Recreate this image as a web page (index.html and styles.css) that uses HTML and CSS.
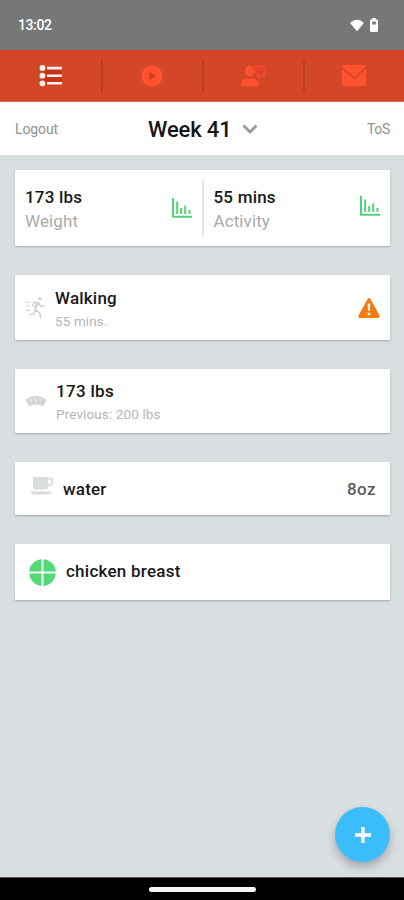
FILE: index.html
```html
<!DOCTYPE html>
<html lang="en">
<head>
<meta charset="utf-8">
<title>Week 41</title>
<link rel="stylesheet" href="styles.css">
</head>
<body>
<div class="app">
  <div class="status">
    <span class="clock">13:02</span>
    <svg class="wifi" viewBox="0 0 16 14"><path d="M0.500 4.200Q8-2.500 15.500 4.200L8 13.300Z"/></svg>
    <svg class="battery" viewBox="0 0 8 14"><path fill-rule="evenodd" d="M2.300 0h3.400v1.400h1.100Q8 1.400 8 2.600v9.900Q8 14 6.600 14H1.400Q0 14 0 12.500V2.600Q0 1.400 1.200 1.400h1.100zM2.200 3.600v3h3.600v-3z"/></svg>
  </div>
  <nav class="tabs">
    <a class="tab active"><svg width="24" height="24" viewBox="0 0 24 24"><g fill="#fff3ee"><path fill="#b52106" d="M3 3h20v18H3z" opacity=".5"/><circle cx="3.500" cy="4" r="2.900"/><circle cx="3.500" cy="11.700" r="2.900"/><circle cx="3.500" cy="19.300" r="2.900"/><path d="M8 2.800h15v2.600H8zM8 10.400h15V13H8zM8 18h15v2.600H8z"/></g></svg></a>
    <a class="tab"><svg width="22" height="22" viewBox="0 0 22 22"><circle cx="11" cy="11" r="10.500"/><path fill="#ce3c22" d="M8.300 6.800v8.400l6.800-4.200z"/></svg></a>
    <a class="tab"><svg width="26" height="22" viewBox="0 0 26 22"><ellipse cx="9.500" cy="6" rx="4.500" ry="5.400"/><path d="M1 21v-1.500Q1.500 14.500 7 13l2.700 1.200L12.500 13Q18 14.500 18.500 19.500V21z"/><path d="M15 7.800V1.700h9.500v8.500h-2.200l-3.300 2.600v-2.600h-3.500" fill="#dd4327" stroke="#f44c2d" stroke-width="1.700" stroke-linejoin="round"/></svg></a>
    <a class="tab"><svg width="24" height="21" viewBox="0 0 24 21"><path d="M1.500 0h21Q24 0 24 1.500L12.500 12 0 1.500Q0 0 1.500 0zM0 4l12.500 10.300L24 4v15q0 2-2 2H2q-2 0-2-2z"/></svg></a>
  </nav>
  <header class="header">
    <a class="logout">Logout</a>
    <h1>Week 41</h1>
    <svg class="chevron" viewBox="0 0 16 10"><path d="M1.500 1.500 8 8l6.500-6.500"/></svg>
    <a class="tos">ToS</a>
  </header>
  <main class="feed">
    <section class="card summary">
      <div class="metric">
        <div><div class="title">173 lbs</div><div class="label">Weight</div></div>
        <svg class="chart low" viewBox="0 0 20 20"><path d="M1 0v18.700h19"/><path d="M5.200 3.500v12.500M9.200 10v6M13.200 7.500v8.500M17.500 12v4"/></svg>
      </div>
      <div class="metric">
        <div><div class="title">55 mins</div><div class="label">Activity</div></div>
        <svg class="chart" viewBox="0 0 20 20"><path d="M1 0v18.700h19"/><path d="M5.200 3.500v12.500M9.200 10v6M13.200 7.500v8.500M17.500 12v4"/></svg>
      </div>
    </section>
    <section class="card entry walking">
      <svg class="runner" viewBox="0 0 20 24"><circle cx="15" cy="2.700" r="1.700" fill="#d0d4d5" stroke="none"/><path d="M0 6h5M1.500 10h3.500M1 14.500h4.500" stroke-width="1.200"/><path d="M7.500 10.500l1.500-4 4.300.2 2 3.300h4M13 7l-2.700 6.500 4.500 3.500 1 5.500M10.500 14l-2 4.500H4.500"/><path d="M12.300 7l-2.300 6" stroke-width="2.400"/></svg>
      <div class="text"><div class="title">Walking</div><div class="small">55 mins.</div></div>
      <svg class="warning" viewBox="0 0 22 20"><path fill="#f27a12" d="M9.600 1Q11-.8 12.400 1l9 16.300Q22 20 20 20H2Q0 20 .6 17.300z"/><path fill="#fff0dc" d="M9.700 5.500h2.600L12 13h-2zM9.700 14.700h2.600v2.500H9.700z"/></svg>
    </section>
    <section class="card entry weight">
      <svg class="scale" viewBox="0 0 22 12"><path fill="#d3d6d7" d="M.4 5Q11-3.500 21.600 5l-3.400 5.700q-1 .6-2-.3-5.200-2-10.400 0-1 .9-2 .3z"/><path d="M5.500 4l1 3M9.500 3l2 4.500M15.500 4l-.5 2" stroke="#f2f3f3" stroke-width="1"/></svg>
      <div class="text"><div class="title">173 lbs</div><div class="small">Previous: 200 lbs</div></div>
    </section>
    <section class="card entry water">
      <svg class="cup" viewBox="0 0 24 18"><path fill="#d9dddd" d="M3 0h15v10q0 2.500-2.500 2.500h-10Q3 12.500 3 10zM0 14.500h22Q21 17.500 19 17.500H3Q1 17.500 0 14.500z"/><path fill="none" stroke="#d9dddd" stroke-width="1.800" d="M17 1.500h2.500q3 0 3 3.200t-3 3.300H17"/></svg>
      <div class="title">water</div><div class="amount">8oz</div>
    </section>
    <section class="card entry food">
      <svg class="plate" viewBox="0 0 27 27"><circle cx="13.500" cy="13.500" r="13.300" fill="#54d977"/><path d="M13.500 0v27M0 13.500h27" stroke="#effff2" stroke-width="2"/></svg>
      <div class="title">chicken breast</div>
    </section>
  </main>
  <footer class="system"><div class="handle"></div></footer>
  <button class="add" aria-label="Add"><svg width="16" height="16" viewBox="0 0 16 16"><path d="M8 0v16M0 8h16" stroke="#fff" stroke-width="3.400"/></svg></button>
</div>
</body>
</html>
```
FILE: styles.css
```css
* { box-sizing: border-box; }
body { margin: 0; font-family: Roboto, "Liberation Sans", sans-serif; }
svg { display: block; flex-shrink: 0; }
.app { position: relative; width: 404px; height: 900px; display: flex; flex-direction: column; overflow: hidden; background: #d9dee0; }
.status { height: 50px; background: #777; color: #fff; display: flex; align-items: center; padding: 0 26px 0 18px; flex-shrink: 0; }
.clock { font-size: 14px; line-height: 16px; font-weight: 500; letter-spacing: -0.4px; flex: 1; }
.wifi { width: 16px; height: 13px; fill: #fff; margin-right: 5px; }
.battery { width: 8px; height: 14px; fill: #fff; }
.tabs { height: 52px; background: #d34727; display: grid; grid-template-columns: repeat(4, 1fr); flex-shrink: 0; border-bottom: 1px solid #e5684f; }
.tab { display: flex; align-items: center; justify-content: center; fill: #ff5231; position: relative; }
.tab + .tab::before { content: ""; position: absolute; left: 0; top: 10px; width: 2px; height: 32px; background: #bd3e23; }
.header { height: 53px; background: #fff; display: flex; align-items: center; padding: 0 14px 0 15px; flex-shrink: 0; color: #8f8f8f; font-size: 14px; }
.logout { width: 133px; letter-spacing: -0.1px; }
h1 { margin: 0; font-size: 22px; line-height: 26px; font-weight: 500; color: #161616; padding-top: 3px; width: 94px; white-space: nowrap; letter-spacing: -0.15px; }
.chevron { width: 16px; height: 10px; fill: none; stroke: #999; stroke-width: 2.800; }
.tos { margin-left: auto; letter-spacing: -0.3px; }
.feed { flex: 1; padding: 15px 14px 0 15px; display: flex; flex-direction: column; gap: 29px; }
.card { background: #fff; display: flex; box-shadow: 0 1px 2px rgba(80, 90, 95, .4); border-radius: 1px; }
.title { font-size: 17px; line-height: 20px; font-weight: 500; color: #191919; letter-spacing: .2px; }
.summary { height: 76px; }
.metric { flex: 1; display: flex; justify-content: space-between; padding: 17px 11px 0 10px; position: relative; }
.metric + .metric { padding-left: 11px; padding-right: 10px; }
.metric + .metric::before { content: ""; position: absolute; left: -1px; top: 10px; width: 2px; height: 57px; background: #e3e5e6; }
.label { font-size: 17px; line-height: 20px; color: #aaa; margin-top: 4px; letter-spacing: .1px; }
.chart { width: 20px; height: 20px; margin-top: 9px; fill: none; stroke: #50d477; stroke-width: 2; }
.chart.low { margin-top: 11px; }
.entry { align-items: center; }
.small { color: #b5b5b5; font-size: 13.500px; line-height: 16px; letter-spacing: .12px; }
.walking { height: 65px; padding: 0 10px 0 10px; }
.runner { width: 20px; height: 24px; fill: none; stroke: #d0d4d5; stroke-width: 1.700; }
.walking .text { margin-left: 10px; padding-top: 1px; }
.text .small { margin-top: 5px; }
.warning { margin-left: auto; width: 22px; height: 20px; }
.weight { height: 64px; padding-left: 10px; }
.scale { width: 22px; height: 12px; }
.weight .text { margin-left: 9px; }
.weight .title { letter-spacing: .3px; }
.water { height: 53px; padding: 0 14px 0 15px; }
.cup { width: 24px; height: 18px; margin-top: -5px; }
.water .title { margin-left: 9px; padding-top: 1px; }
.amount { margin-left: auto; font-size: 17px; line-height: 20px; padding-top: 1px; color: #5b5b5b; font-weight: 500; letter-spacing: .4px; }
.food { height: 56px; padding-left: 14px; }
.plate { width: 27px; height: 27px; }
.food .title { margin-left: 10px; padding-bottom: 2px; letter-spacing: .25px; }
.system { height: 23px; background: #000; flex-shrink: 0; display: flex; justify-content: center; align-items: center; border-top: 1px solid #555; }
.handle { width: 107px; height: 5px; border-radius: 3px; background: #f4f4f4; }
.add { position: absolute; left: 335px; top: 807px; width: 55px; height: 55px; padding: 0; border: 0; border-radius: 50%; background: #3bbdfb; display: flex; align-items: center; justify-content: center; box-shadow: 0 5px 10px rgba(0, 0, 0, .25); }
```
